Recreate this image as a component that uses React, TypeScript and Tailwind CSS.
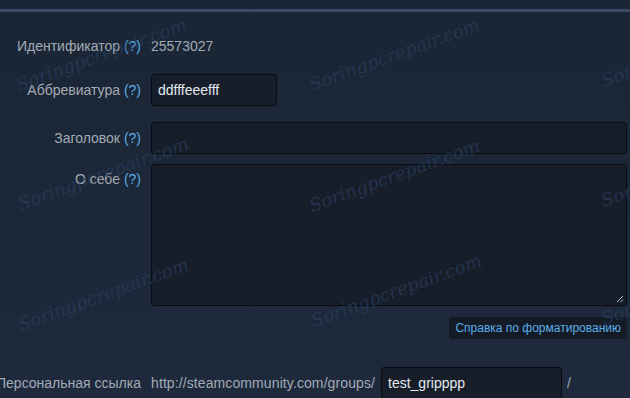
import React from "react";

const marks: { left: number; top: number }[] = [
  { left: 20, top: 76 },
  { left: 313, top: 76 },
  { left: 605, top: 72 },
  { left: 22, top: 195 },
  { left: 313, top: 197 },
  { left: 605, top: 192 },
  { left: 22, top: 316 },
  { left: 315, top: 312 },
  { left: 605, top: 310 },
];

function Help() {
  return <span className="text-[#5aaee8]"> (?)</span>;
}

function Label({ children, className = "" }: { children: React.ReactNode; className?: string }) {
  return (
    <div className={`w-[141px] shrink-0 flex justify-end whitespace-nowrap text-[#a3abb4] ${className}`}>
      <span>{children}</span>
    </div>
  );
}

const font = { fontFamily: '"Liberation Sans", Arial, sans-serif' };

export default function App() {
  return (
    <div
      className="relative w-[630px] h-[398px] overflow-hidden bg-gradient-to-b from-[#1a2535] to-[#1e2a3c] text-[14px] leading-[16px]"
      style={font}
    >
      <div className="pt-[9px]">
        <div className="h-[3px] bg-[#3b4b65]" />
      </div>

      <div className="flex flex-col">
        <div className="flex items-center mt-[26px] h-[16px]">
          <Label>
            Идентификатор<Help />
          </Label>
          <div className="ml-[10px] text-[#a3abb4]">25573027</div>
        </div>

        <div className="flex items-center mt-[20px] h-[32px]">
          <Label>
            Аббревиатура<Help />
          </Label>
          <input
            readOnly
            value="ddfffeeefff"
            className="ml-[10px] w-[126px] h-[32px] rounded-[3px] border border-[#090d13] bg-[#171e2a] px-[6px] text-[14px] text-[#e4eaf0] outline-none"
            style={font}
          />
        </div>

        <div className="flex items-center mt-[16px] h-[32px]">
          <Label>
            Заголовок<Help />
          </Label>
          <input
            readOnly
            value=""
            className="ml-[10px] w-[476px] h-[32px] rounded-[3px] border border-[#090d13] bg-[#171e2a] px-[6px] text-[14px] text-[#e4eaf0] outline-none"
          />
        </div>

        <div className="flex items-start mt-[10px]">
          <Label className="pt-[7px]">
            О себе<Help />
          </Label>
          <div className="relative ml-[10px] w-[476px] h-[142px]">
            <textarea
              readOnly
              value=""
              className="block w-full h-full resize-none rounded-[3px] border border-[#090d13] bg-[#171e2a] px-[6px] text-[14px] text-[#e4eaf0] outline-none"
            />
            <svg
              className="absolute right-[3px] bottom-[3px] pointer-events-none"
              width="8"
              height="8"
              viewBox="0 0 8 8"
            >
              <line x1="1" y1="7" x2="7" y2="1" stroke="#b8bec6" strokeWidth="1" />
              <line x1="4.5" y1="7" x2="7" y2="4.5" stroke="#b8bec6" strokeWidth="1" />
            </svg>
          </div>
        </div>

        <div className="flex mt-[11px]">
          <div className="w-[627px] flex justify-end">
            <div className="h-[22px] px-[6px] flex items-center rounded-[2px] bg-[#141b26] text-[12px] text-[#5aaee8] whitespace-nowrap">
              Справка по форматированию
            </div>
          </div>
        </div>

        <div className="flex items-center mt-[28px] h-[32px]">
          <Label>Персональная ссылка</Label>
          <div className="ml-[10px] w-[225px] shrink-0 text-[#a3abb4] whitespace-nowrap tracking-[0.1px]">
            http://steamcommunity.com/groups/
          </div>
          <input
            readOnly
            value="test_gripppp"
            className="ml-[5px] w-[181px] h-[32px] rounded-[3px] border border-[#090d13] bg-[#171e2a] px-[6px] text-[14px] text-[#e4eaf0] outline-none"
            style={font}
          />
          <div className="ml-[5px] text-[#a3abb4]">/</div>
        </div>
      </div>

      {marks.map((m, i) => (
        <div
          key={i}
          className="pointer-events-none absolute whitespace-nowrap italic text-[18px] leading-[18px] text-[#2b4163] opacity-60 origin-bottom-left -rotate-[20deg]"
          style={{ left: m.left, top: m.top, fontFamily: '"DejaVu Serif", serif' }}
        >
          Soringpcrepair.com
        </div>
      ))}
    </div>
  );
}
